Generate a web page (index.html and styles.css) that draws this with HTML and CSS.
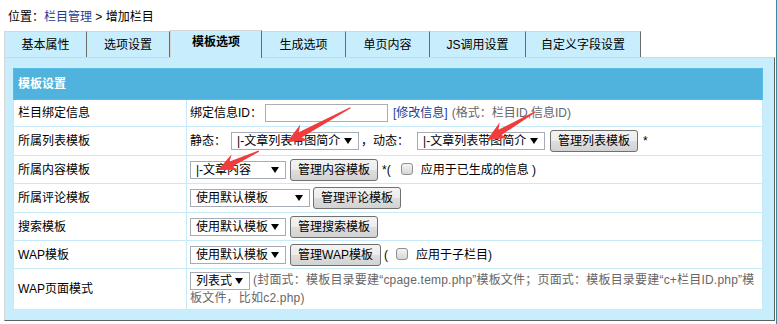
FILE: index.html
```html
<!DOCTYPE html>
<html lang="zh-CN">
<head>
<meta charset="utf-8">
<title>增加栏目</title>
<link rel="stylesheet" href="styles.css">
</head>
<body>
<div class="crumb">位置：<a href="#" class="crumb-link">栏目管理</a> &gt; 增加栏目</div>
<div class="tabs">
  <div class="tab tab-first w83">基本属性</div>
  <div class="tab w83">选项设置</div>
  <div class="tab tab-active w92">模板选项</div>
  <div class="tab w84">生成选项</div>
  <div class="tab w84">单页内容</div>
  <div class="tab w96">JS调用设置</div>
  <div class="tab w115">自定义字段设置</div>
</div>
<div class="panel">
  <table class="grid">
    <tr class="hrow"><td colspan="2" class="head">模板设置</td></tr>
    <tr class="r27">
      <td class="label">栏目绑定信息</td>
      <td class="field"><div class="line">绑定信息ID：<input class="txt" type="text"><a href="#" class="link">[修改信息]</a><span class="hint ml4">(格式：栏目ID,信息ID)</span></div></td>
    </tr>
    <tr class="r29">
      <td class="label">所属列表模板</td>
      <td class="field"><div class="line">静态：<span class="sel w128 ml5"><span>|-文章列表带图简介</span><i class="arr"></i></span><span class="ml2">，动态：</span><span class="sel w128 ml8"><span>|-文章列表带图简介</span><i class="arr"></i></span><button class="btn ml5">管理列表模板</button><span class="ml5">*</span></div></td>
    </tr>
    <tr class="r28">
      <td class="label">所属内容模板</td>
      <td class="field"><div class="line"><span class="sel w96"><span>|-文章内容</span><i class="arr"></i></span><button class="btn ml4">管理内容模板</button><span class="ml4">*(</span><input type="checkbox" class="chk ml10"><span class="ml8">应用于已生成的信息 )</span></div></td>
    </tr>
    <tr class="r29">
      <td class="label">所属评论模板</td>
      <td class="field"><div class="line"><span class="sel w120"><span>使用默认模板</span><i class="arr"></i></span><button class="btn ml3">管理评论模板</button></div></td>
    </tr>
    <tr class="r28">
      <td class="label">搜索模板</td>
      <td class="field"><div class="line"><span class="sel w96"><span>使用默认模板</span><i class="arr"></i></span><button class="btn ml4">管理搜索模板</button></div></td>
    </tr>
    <tr class="r28">
      <td class="label">WAP模板</td>
      <td class="field"><div class="line"><span class="sel w96"><span>使用默认模板</span><i class="arr"></i></span><button class="btn ml4">管理WAP模板</button><span class="ml3">(</span><input type="checkbox" class="chk ml8"><span class="ml8">应用于子栏目)</span></div></td>
    </tr>
    <tr class="r41">
      <td class="label">WAP页面模式</td>
      <td class="field note"><span class="sel w60 inl"><span>列表式</span><i class="arr"></i></span><span class="hint spaced ml3">(封面式：模板目录要建“cpage.temp.php”模板文件；页面式：模板目录要建“c+栏目ID.php”模板文件，比如c2.php)</span></td>
    </tr>
  </table>
</div>
<svg class="marks" width="777" height="324" viewBox="0 0 777 324" aria-hidden="true">
  <g fill="#f03c3c">
    <polygon transform="translate(287,142) rotate(151.6)" points="0,0 -20,-9 -15,-3 -72,-0.7 -72,0.7 -15,3 -20,9"/>
    <polygon transform="translate(487,140) rotate(149.7)" points="0,0 -20,-9 -15,-3 -56,-0.7 -56,0.7 -15,3 -20,9"/>
    <polygon transform="translate(218,170) rotate(155.1)" points="0,0 -19,-8.5 -14,-2.8 -45,-0.7 -45,0.7 -14,2.8 -19,8.5"/>
  </g>
</svg>
</body>
</html>
```
FILE: styles.css
```css
* { box-sizing: border-box; }
html { background: #fff; }
body {
  margin: 0;
  position: relative;
  min-height: 324px;
  border-right: 1px solid #3d8c9c;
  font-family: "Liberation Sans", "Noto Sans CJK SC", sans-serif;
  font-size: 12px;
  line-height: 16px;
  color: #000;
}
.crumb { height: 30px; padding: 10px 0 0 8px; line-height: 14px; }
.crumb-link { color: #1d3d94; text-decoration: none; }

.tabs {
  display: flex;
  align-items: flex-end;
  height: 28px;
  padding-left: 4px;
  margin-bottom: -1px;
  position: relative;
  z-index: 1;
}
.tab {
  height: 26px;
  margin-bottom: 1px;
  display: flex;
  align-items: center;
  justify-content: center;
  background: #c8eefd;
  border-top: 1px solid #d6d6d6;
  border-right: 1px solid #6a6a6a;
  line-height: 14px;
  padding-top: 1px;
}
.tab-first { border-left: 1px solid #d6d6d6; }
.tab-active {
  height: 28px;
  margin-bottom: 0;
  align-items: flex-start;
  padding-top: 4px;
  font-weight: bold;
  border-left: 1px solid #d6d6d6;
}
.w83 { width: 83px; }
.w84 { width: 84px; }
.w92 { width: 92px; }
.w96 { width: 96px; }
.w115 { width: 115px; }

.panel {
  margin: 0 1px 0 4px;
  background: #c8eefd;
  border-top: 1px solid #d6d6d6;
  border-left: 1px solid #d6d6d6;
  border-right: 1px solid #5f5f5f;
  border-bottom: 1px solid #5f5f5f;
  padding: 10px 11px 10px 8px;
}
.grid {
  width: 100%;
  border-collapse: collapse;
  border: 1px solid #56bce6;
  background: #fff;
}
.grid td {
  border: 1px solid #c6eaf8;
  padding: 0 3px;
  vertical-align: middle;
}
.grid td.head {
  background: #4fb3dd;
  color: #fff;
  font-weight: bold;
  height: 31px;
  padding-left: 4px;
  border-color: #56bce6;
}
.grid td.label { width: 173px; padding-left: 4px; }
.r27 td { height: 27px; }
.r28 td { height: 28px; }
.r29 td { height: 29px; }
.r41 td { height: 41px; }

.line { display: flex; align-items: center; white-space: nowrap; }
.txt {
  width: 123px;
  height: 18px;
  margin: 0 5px 0 3px;
  border: 1px solid #abadb3;
  padding: 0 2px;
  font: inherit;
}
.link { color: #1d3d94; text-decoration: none; }
.hint { color: #666; }
.spaced { letter-spacing: 0.2px; }

.sel {
  display: inline-flex;
  align-items: center;
  justify-content: space-between;
  height: 18px;
  border: 1px solid #a5acb5;
  background: #fff;
  padding: 0 6px 0 5px;
  white-space: nowrap;
  line-height: 16px;
}
.sel.inl { vertical-align: middle; }
.arr {
  width: 0;
  height: 0;
  border-left: 4px solid transparent;
  border-right: 4px solid transparent;
  border-top: 6px solid #000;
}
.w60 { width: 60px; }
.w120 { width: 120px; }
.w128 { width: 128px; }

.btn {
  height: 22px;
  padding: 0 7px;
  border: 1px solid #707070;
  border-radius: 3px;
  background: linear-gradient(#f3f3f3 0, #ececec 50%, #dedede 50%, #d2d2d2 100%);
  font: inherit;
  line-height: 20px;
  color: #000;
}
.chk {
  -webkit-appearance: none;
  appearance: none;
  width: 12px;
  height: 12px;
  margin-top: 0;
  margin-bottom: 2px;
  margin-right: 0;
  border: 1px solid #8f8f8f;
  border-radius: 3px;
  background: linear-gradient(#f4f4f4, #d6d6d6);
}
.note { line-height: 16px; padding-top: 3px; padding-bottom: 3px; }

.ml2 { margin-left: 2px; }
.ml3 { margin-left: 3px; }
.ml4 { margin-left: 4px; }
.ml5 { margin-left: 5px; }
.ml8 { margin-left: 8px; }
.ml10 { margin-left: 10px; }

.marks {
  position: absolute;
  left: 0;
  top: 0;
  pointer-events: none;
}
```
